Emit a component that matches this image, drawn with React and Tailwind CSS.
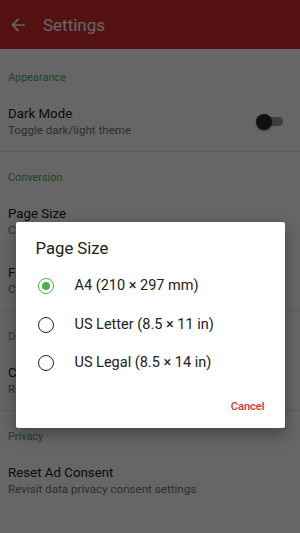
import { useState } from 'react'

const sections = [
    {
        title: 'Appearance',
        first: true,
        rows: [{ title: 'Dark Mode', sub: 'Toggle dark/light theme', toggle: true }],
    },
    {
        title: 'Conversion',
        rows: [
            { title: 'Page Size', sub: 'Choose the default page size' },
            { title: 'File Naming', sub: 'Customize output file names' },
        ],
    },
    {
        title: 'Data',
        rows: [{ title: 'Clear Cache', sub: 'Remove temporary files' }],
    },
    {
        title: 'Privacy',
        last: true,
        rows: [{ title: 'Reset Ad Consent', sub: 'Revisit data privacy consent settings' }],
    },
]

const sizes = ['A4 (210 × 297 mm)', 'US Letter (8.5 × 11 in)', 'US Legal (8.5 × 14 in)']

function Toggle() {
    return (
        <div className="relative w-[27px] h-[16px] mr-[17px]">
            <div className="absolute right-0 top-[3.5px] w-[21px] h-[9px] rounded-full bg-[#9a9a9e]" />
            <div className="absolute left-0 top-0 w-[16px] h-[16px] rounded-full bg-[#2a2a2a] shadow-[0_1px_2px_rgba(0,0,0,0.4)]" />
        </div>
    )
}

function Radio({ checked }) {
    return (
        <div className={`shrink-0 w-[16px] h-[16px] rounded-full border-[1.7px] flex items-center justify-center ${checked ? 'border-[#4CAF50]' : 'border-[#222]'}`}>
            {checked && <div className="w-[8px] h-[8px] rounded-full bg-[#4CAF50]" />}
        </div>
    )
}

export default function App() {
    const [selected, setSelected] = useState(0)

    return (
        <div className="relative w-full h-[533px] overflow-hidden bg-white font-[Roboto,sans-serif]">
            {/* Toolbar */}
            <div className="h-[49px] bg-[#D32F2F] flex items-center pl-[8px]">
                <svg width="20" height="20" viewBox="0 0 24 24" fill="white">
                    <path d="M20 11H7.83l5.59-5.59L12 4l-8 8 8 8 1.41-1.41L7.83 13H20v-2z" />
                </svg>
                <h1 className="ml-[15px] text-white text-[17px] leading-[24px]">Settings</h1>
            </div>

            {/* Preference list */}
            {sections.map((s) => (
                <div key={s.title} className={s.last ? '' : 'border-b border-[#e6e6e6]'}>
                    <div className={`px-[8px] pb-[6px] ${s.first ? 'pt-[21px]' : 'pt-[18px]'}`}>
                        <p className="text-[10.9px] leading-[16px] text-[#4CAF50]">{s.title}</p>
                    </div>
                    {s.rows.map((r) => (
                        <div key={r.title} className="h-[59px] pl-[8px] flex items-center justify-between">
                            <div className="pt-[1px]">
                                <p className="text-[13.3px] leading-[16px] text-[#212121]">{r.title}</p>
                                <p className="mt-[1px] text-[11.6px] leading-[15px] text-[#757575]">{r.sub}</p>
                            </div>
                            {r.toggle && <Toggle />}
                        </div>
                    ))}
                </div>
            ))}

            {/* Dialog */}
            <div className="absolute inset-0 bg-black/60 flex justify-center items-start pt-[222px]">
                <div className="w-[269px] bg-white rounded-[2px] shadow-[0_6px_16px_rgba(0,0,0,0.35)]">
                    <h2 className="pt-[15px] pl-[20px] text-[16.7px] leading-[24px] text-[#212121]">Page Size</h2>
                    <div className="mt-[6px]">
                        {sizes.map((label, i) => (
                            <button key={label} onClick={() => setSelected(i)}
                                className="w-full h-[38.5px] flex items-center gap-[21px] pl-[22px] text-left"
                            >
                                <Radio checked={selected === i} />
                                <span className="text-[14.5px] leading-[20px] text-[#212121]">{label}</span>
                            </button>
                        ))}
                    </div>
                    <div className="flex justify-end pr-[20px] pt-[16px] pb-[13px]">
                        <button className="text-[11px] leading-[16px] font-medium text-[#D32F2F]">Cancel</button>
                    </div>
                </div>
            </div>
        </div>
    )
}
